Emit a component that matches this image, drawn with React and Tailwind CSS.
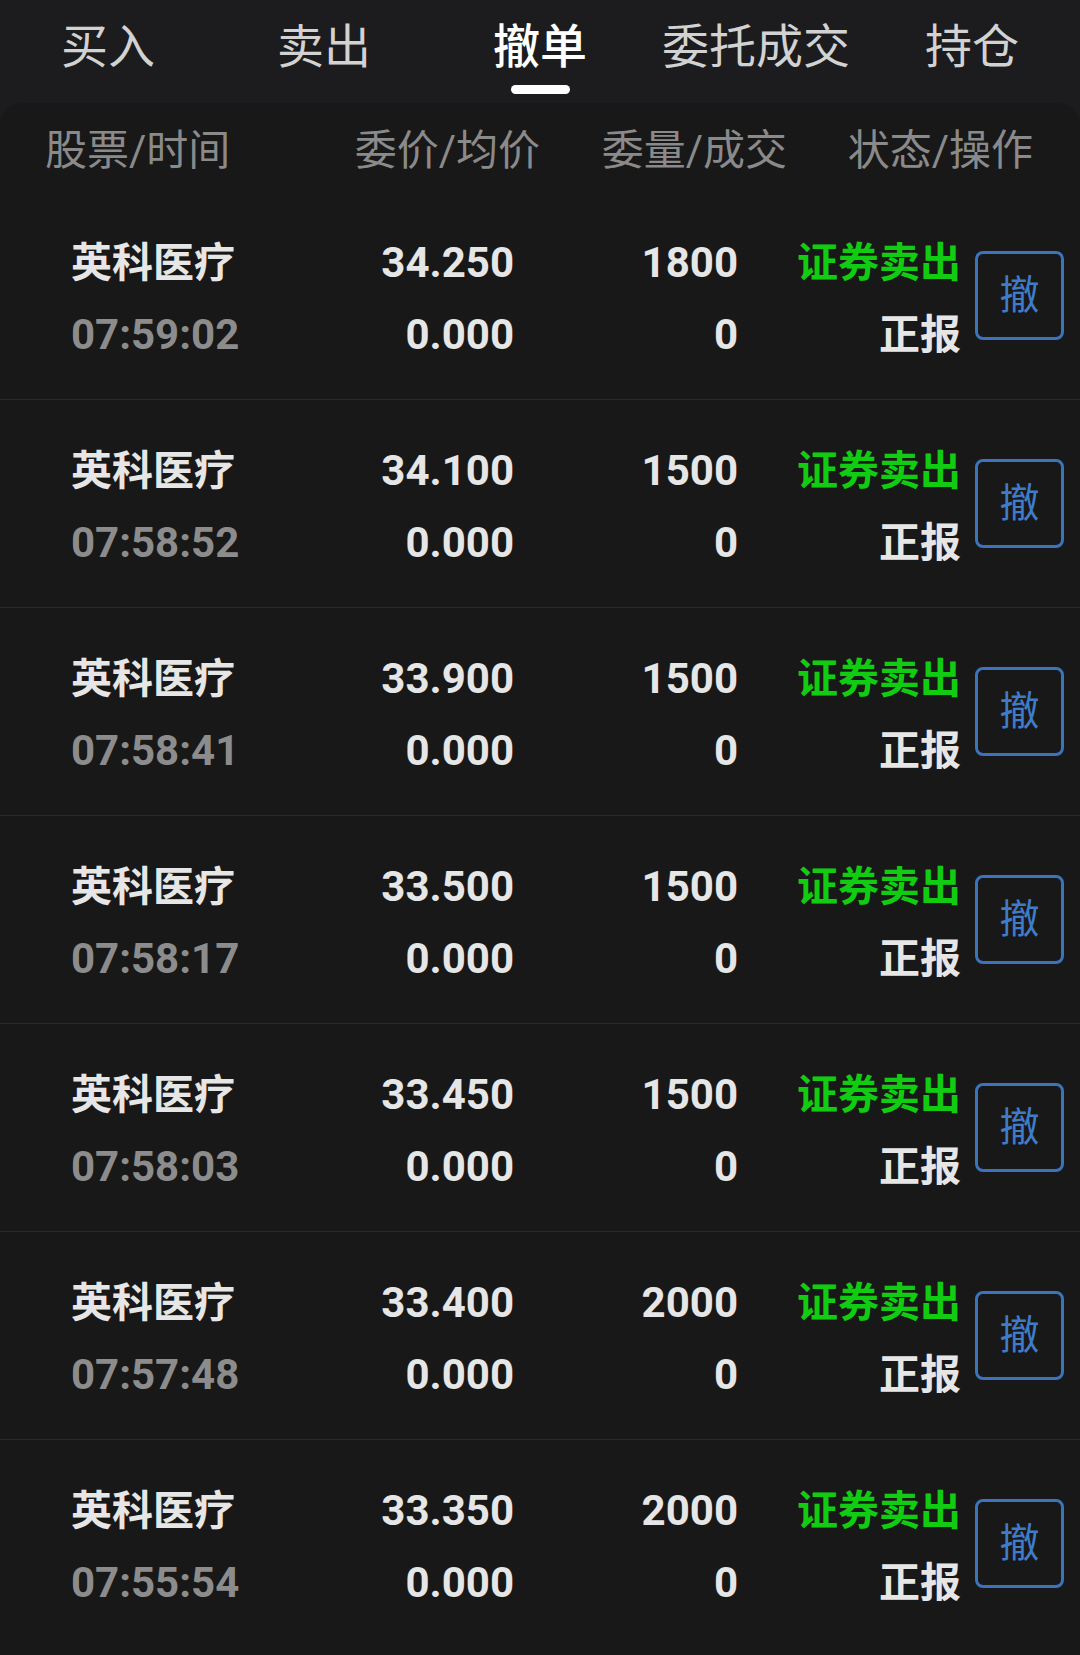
const tabs = ['买入', '卖出', '撤单', '委托成交', '持仓']

const orders = [
  { time: '07:59:02', price: '34.250', qty: '1800' },
  { time: '07:58:52', price: '34.100', qty: '1500' },
  { time: '07:58:41', price: '33.900', qty: '1500' },
  { time: '07:58:17', price: '33.500', qty: '1500' },
  { time: '07:58:03', price: '33.450', qty: '1500' },
  { time: '07:57:48', price: '33.400', qty: '2000' },
  { time: '07:55:54', price: '33.350', qty: '2000' },
]

function OrderRow({ o, last }) {
  return (
    <div className={`flex items-start h-[208px] ${last ? '' : 'border-b border-[#2a2a2a]'}`}>
      <div className="w-[300px] pl-[71px] mt-[35px] flex flex-col">
        <span className="leading-[72px] text-[41px] font-bold text-[#e6e6e6]">英科医疗</span>
        <span className="leading-[72px] text-[42px] font-bold text-[#8c8c8c]">{o.time}</span>
      </div>
      <div className="w-[214px] mt-[35px] flex flex-col items-end">
        <span className="leading-[72px] text-[42px] font-bold text-[#e6e6e6]">{o.price}</span>
        <span className="leading-[72px] text-[42px] font-bold text-[#e6e6e6]">0.000</span>
      </div>
      <div className="w-[224px] mt-[35px] flex flex-col items-end">
        <span className="leading-[72px] text-[42px] font-bold text-[#e6e6e6]">{o.qty}</span>
        <span className="leading-[72px] text-[42px] font-bold text-[#e6e6e6]">0</span>
      </div>
      <div className="w-[223px] mt-[35px] flex flex-col items-end">
        <span className="leading-[72px] text-[41px] font-bold text-[#12cc12]">证券卖出</span>
        <span className="leading-[72px] text-[41px] font-bold text-[#e6e6e6]">正报</span>
      </div>
      <button className="ml-[14px] mt-[59px] w-[89px] h-[89px] border-[3px] border-[#3c74bc] rounded-[8px] flex items-center justify-center text-[40px] text-[#3f7cc8]">
        撤
      </button>
    </div>
  )
}

export default function App() {
  return (
    <div className="w-[1080px] h-[1655px] overflow-hidden bg-[#1c1c1e]" style={{ fontFamily: 'Roboto, "Noto Sans CJK SC", sans-serif' }}>
      <div className="flex h-[103px]">
        {tabs.map((t, i) => (
          <div key={t} className="flex-1 flex flex-col items-center">
            <span className={`mt-[19px] leading-[56px] text-[47px] ${i === 2 ? 'text-white font-medium' : 'text-[#d2d2d2]'}`}>{t}</span>
            {i === 2 && <div className="mt-[10px] w-[59px] h-[9px] rounded-full bg-white" />}
          </div>
        ))}
      </div>

      <div className="bg-[#181818] rounded-t-[22px] h-full">
        <div className="flex items-center h-[89px] pt-[5px] text-[42px] text-[#8a8a8a]">
          <div className="w-[300px] pl-[45px]">股票/时间</div>
          <div className="w-[240px] text-right">委价/均价</div>
          <div className="w-[247px] text-right">委量/成交</div>
          <div className="w-[246px] text-right">状态/操作</div>
        </div>
        {orders.map((o, i) => (
          <OrderRow key={o.time} o={o} last={i === orders.length - 1} />
        ))}
      </div>
    </div>
  )
}
